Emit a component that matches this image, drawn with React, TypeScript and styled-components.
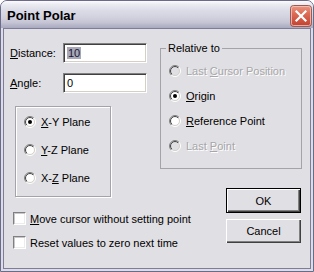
import React from "react";
import styled, { createGlobalStyle } from "styled-components";

const GlobalStyle = createGlobalStyle`
  html, body { margin: 0; padding: 0; background: #ffffff; }
  body { font-family: "Liberation Sans", Arial, sans-serif; font-size: 11px; color: #000; }
  * { box-sizing: border-box; }
`;

const Window = styled.div`
  width: 314px;
  height: 272px;
  border: 1px solid #6b6a8a;
  border-radius: 7px 7px 0 0;
  background: #dcdce6;
  display: flex;
  flex-direction: column;
  overflow: hidden;
`;

const TitleBar = styled.div`
  height: 27px;
  flex: none;
  display: flex;
  align-items: center;
  justify-content: space-between;
  padding: 2px 1px 0 6px;
  background: linear-gradient(
    to bottom,
    #fdfdfe 0%,
    #ebebf2 12%,
    #dcdce7 35%,
    #d2d2df 60%,
    #c4c4d4 80%,
    #a9a9c0 100%
  );
`;

const Title = styled.span`
  font: bold 13px "Liberation Sans", Arial, sans-serif;
  color: #000;
`;

const CloseButton = styled.div`
  width: 22px;
  height: 22px;
  display: flex;
`;

const ClientFrame = styled.div`
  flex: 1;
  margin: 0 2px 2px;
  border: 1px solid #7d7c9a;
  background: #e0dfe3;
  display: flex;
  padding-left: 6px;
`;

const LeftColumn = styled.div`
  width: 150px;
  display: flex;
  flex-direction: column;
`;

const RightColumn = styled.div`
  width: 142px;
  display: flex;
  flex-direction: column;
  padding-top: 13px;
`;

const FieldRow = styled.div<{ $top: number }>`
  display: flex;
  align-items: center;
  height: 20px;
  margin-top: ${(p) => p.$top}px;
`;

const Label = styled.span`
  width: 53px;
`;

const TextBox = styled.div`
  width: 84px;
  height: 20px;
  background: #fff;
  border-style: solid;
  border-width: 1px;
  border-color: #808080 #fff #fff #808080;
  box-shadow: inset 1px 1px 0 #404040, inset -1px -1px 0 #d4d0c8;
  padding: 2px 0 0 3px;
  line-height: 14px;
`;

const Selected = styled.span`
  background: #a9a8b5;
  color: #15153a;
  padding: 0 1px;
`;

const PlaneGroup = styled.div`
  margin: 13px 0 0 5px;
  width: 96px;
  height: 91px;
  border: 1px solid #a4a3aa;
  box-shadow: inset 1px 1px 0 #fff, 1px 1px 0 #fff;
  display: flex;
  flex-direction: column;
  padding: 8px 0 0 8px;
  gap: 15px;
`;

const RelativeGroup = styled.fieldset`
  margin: 0;
  width: 142px;
  height: 127px;
  border: 1px solid #a4a3aa;
  padding: 9px 0 0 8px;
  display: flex;
  flex-direction: column;
  gap: 12px;
`;

const Legend = styled.legend`
  padding: 0 2px;
  margin-left: -3px;
  line-height: 13px;
`;

const RadioRow = styled.div<{ $disabled?: boolean }>`
  display: flex;
  align-items: center;
  height: 13px;
  gap: 5px;
  white-space: nowrap;
  color: ${(p) => (p.$disabled ? "#a7a6aa" : "#000")};
  text-shadow: ${(p) => (p.$disabled ? "1px 1px 0 #fff" : "none")};
`;

const CheckRow = styled.div<{ $top: number }>`
  display: flex;
  align-items: center;
  height: 13px;
  margin: ${(p) => p.$top}px 0 0 3px;
  gap: 4px;
  white-space: nowrap;
`;

const CheckBox = styled.div`
  width: 13px;
  height: 13px;
  flex: none;
  background: #fff;
  border-style: solid;
  border-width: 1px;
  border-color: #808080 #fff #fff #808080;
  box-shadow: inset 1px 1px 0 #c8c7cc, inset -1px -1px 0 #ececee;
`;

const ButtonStack = styled.div`
  display: flex;
  flex-direction: column;
  align-items: flex-end;
  gap: 6px;
  margin-top: 19px;
  padding-right: 1px;
`;

const Button = styled.div<{ $default?: boolean }>`
  width: 75px;
  height: ${(p) => (p.$default ? 25 : 24)}px;
  display: flex;
  align-items: center;
  justify-content: center;
  background: #e0dfe3;
  border: ${(p) => (p.$default ? "1px solid #000" : "none")};
  box-shadow: inset 1px 1px 0 #fff, inset -1px -1px 0 #404040, inset -2px -2px 0 #808080;
  color: #000;
`;

const Radio: React.FC<{ checked?: boolean; disabled?: boolean }> = ({ checked, disabled }) => (
  <svg width="12" height="12" viewBox="0 0 12 12" style={{ flex: "none" }}>
    <defs>
      <linearGradient id="rOuter" x1="0" y1="0" x2="1" y2="1">
        <stop offset="0.5" stopColor="#808080" />
        <stop offset="0.5" stopColor="#ffffff" />
      </linearGradient>
      <linearGradient id="rInner" x1="0" y1="0" x2="1" y2="1">
        <stop offset="0.5" stopColor="#404040" />
        <stop offset="0.5" stopColor="#d4d0c8" />
      </linearGradient>
    </defs>
    <circle cx="6" cy="6" r="5.5" fill="none" stroke="url(#rOuter)" strokeWidth="1" />
    <circle cx="6" cy="6" r="4.5" fill={disabled ? "#e0dfe3" : "#fff"} stroke="url(#rInner)" strokeWidth="1" />
    {checked && <circle cx="6" cy="6" r="2" fill="#000" />}
  </svg>
);

const CloseIcon = () => (
  <svg width="22" height="22" viewBox="0 0 22 22">
    <defs>
      <linearGradient id="closeG" x1="0" y1="0" x2="0" y2="1">
        <stop offset="0" stopColor="#ec9a86" />
        <stop offset="0.4" stopColor="#dc6a55" />
        <stop offset="1" stopColor="#c0402f" />
      </linearGradient>
    </defs>
    <rect x="0.5" y="0.5" width="21" height="21" rx="3" fill="url(#closeG)" stroke="#9a5a55" />
    <rect x="1.5" y="1.5" width="19" height="19" rx="2" fill="none" stroke="#f4c6bb" strokeOpacity="0.8" />
    <path d="M6.5 6.5 L15.5 15.5 M15.5 6.5 L6.5 15.5" stroke="#fff" strokeWidth="2.2" strokeLinecap="square" />
  </svg>
);

export default function App() {
  return (
    <>
      <GlobalStyle />
      <Window>
        <TitleBar>
          <Title>Point Polar</Title>
          <CloseButton>
            <CloseIcon />
          </CloseButton>
        </TitleBar>
        <ClientFrame>
          <LeftColumn>
            <FieldRow $top={14}>
              <Label>
                <u>D</u>istance:
              </Label>
              <TextBox>
                <Selected>10</Selected>
              </TextBox>
            </FieldRow>
            <FieldRow $top={10}>
              <Label>
                <u>A</u>ngle:
              </Label>
              <TextBox>0</TextBox>
            </FieldRow>
            <PlaneGroup>
              <RadioRow>
                <Radio checked />
                <span>
                  <u>X</u>-Y Plane
                </span>
              </RadioRow>
              <RadioRow>
                <Radio />
                <span>
                  <u>Y</u>-Z Plane
                </span>
              </RadioRow>
              <RadioRow>
                <Radio />
                <span>
                  X-<u>Z</u> Plane
                </span>
              </RadioRow>
            </PlaneGroup>
            <CheckRow $top={15}>
              <CheckBox />
              <span>
                <u>M</u>ove cursor without setting point
              </span>
            </CheckRow>
            <CheckRow $top={11}>
              <CheckBox />
              <span>Reset values to zero next time</span>
            </CheckRow>
          </LeftColumn>
          <RightColumn>
            <RelativeGroup>
              <Legend>Relative to</Legend>
              <RadioRow $disabled>
                <Radio disabled />
                <span>
                  Last <u>C</u>ursor Position
                </span>
              </RadioRow>
              <RadioRow>
                <Radio checked />
                <span>
                  <u>O</u>rigin
                </span>
              </RadioRow>
              <RadioRow>
                <Radio />
                <span>
                  <u>R</u>eference Point
                </span>
              </RadioRow>
              <RadioRow $disabled>
                <Radio disabled />
                <span>
                  Last <u>P</u>oint
                </span>
              </RadioRow>
            </RelativeGroup>
            <ButtonStack>
              <Button $default>OK</Button>
              <Button>Cancel</Button>
            </ButtonStack>
          </RightColumn>
        </ClientFrame>
      </Window>
    </>
  );
}
